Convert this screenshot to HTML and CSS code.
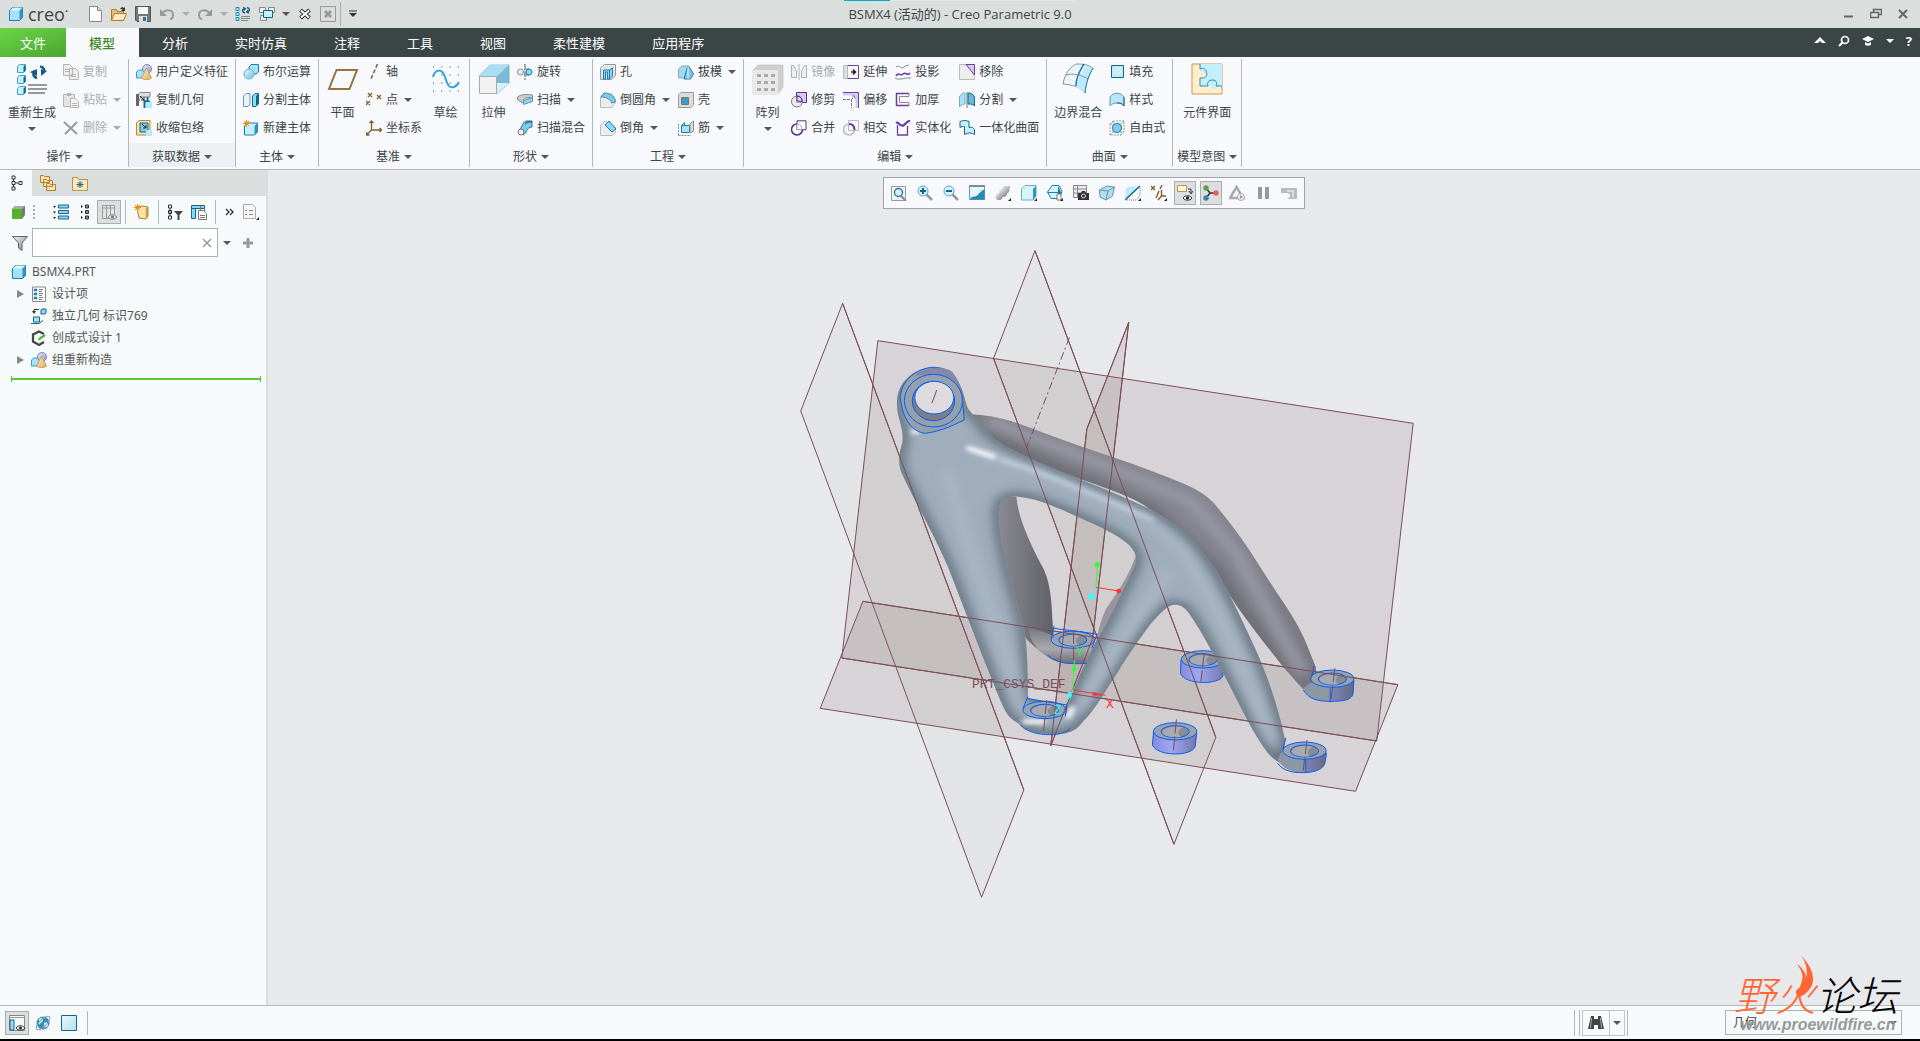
FILE: index.html
```html
<!DOCTYPE html>
<html lang="zh-CN">
<head>
  <meta charset="UTF-8" />
  <meta name="viewport" content="width=device-width, initial-scale=1.0" />
  <title>BSMX4 (活动的) - Creo Parametric 9.0</title>
  <link rel="stylesheet" href="styles.css">
</head>
<body>

<!-- iconos -->
<svg class="defs" width="0" height="0" aria-hidden="true">
  <defs>
    <linearGradient id="gb" x1="0" y1="0" x2="1" y2="1"><stop offset="0" stop-color="#dff5fd"/><stop offset="1" stop-color="#6fc4e6"/></linearGradient>
    <linearGradient id="gg" x1="0" y1="0" x2="1" y2="1"><stop offset="0" stop-color="#f8f8f8"/><stop offset="1" stop-color="#777"/></linearGradient>
    <linearGradient id="gy" x1="0" y1="0" x2="1" y2="1"><stop offset="0" stop-color="#fff1cf"/><stop offset="1" stop-color="#dcae5c"/></linearGradient>
    <linearGradient id="gv" x1="0" y1="0" x2="1" y2="1"><stop offset="0" stop-color="#eeeeff"/><stop offset="1" stop-color="#8d93d8"/></linearGradient>
  </defs>
  <symbol id="cube" viewBox="0 0 16 16"><path d="M1.500 4.500l3-3h10v10l-3 3h-10z" fill="#a5e3fa" stroke="#1b7fae"/><path d="M11.500 4.500l3-3v10l-3 3z" fill="#2e94c0"/><path d="M2 4.500l3-3h9l-3 3z" fill="#dcf6ff"/></symbol>
  <symbol id="new" viewBox="0 0 16 16"><path d="M2.500 .5h8l4 4v11h-12z" fill="#fcfcfc" stroke="#888"/><path d="M10.500 .5v4h4" fill="#ddd" stroke="#888"/></symbol>
  <symbol id="open" viewBox="0 0 16 16"><path d="M.5 14.500v-11h5l1 2h6v9z" fill="#e6c07a" stroke="#a87b2d"/><path d="M.5 14.500l3-7h12l-3 7z" fill="#ffe9bd" stroke="#a87b2d"/><path d="M9 3c1-2 3-2 4-1l1-1v4h-4l1.500-1.500c-1-1-2 0-2.500-.5z" fill="#333"/></symbol>
  <symbol id="save" viewBox="0 0 16 16"><path d="M.5.500h15v15H2l-1.500-1.500z" fill="#777" stroke="#555"/><path d="M3 1h10v7H3z" fill="#f7f7f7"/><path d="M4 10h8v6H4z" fill="#ddd"/><path d="M8 11h3v4H8z" fill="#27769c"/></symbol>
  <symbol id="undo" viewBox="0 0 16 16"><path d="M3 8c3-5 11-5 11 1 0 2-1 4-3 4" fill="none" stroke="#999" stroke-width="2"/><path d="M1 3v7h7z" fill="#999"/></symbol>
  <symbol id="redo" viewBox="0 0 16 16"><path d="M13 8c-3-5-11-5-11 1 0 2 1 4 3 4" fill="none" stroke="#999" stroke-width="2"/><path d="M15 3v7H8z" fill="#999"/></symbol>
  <symbol id="regen" viewBox="0 0 16 16"><path d="M1 1.500h3v3H1zM1 6.500h3v3H1zM1 11.500h3v3H1z" fill="#b9ecfc" stroke="#2088b5"/><path d="M6 10.500h9M6 12.500h9M6 14.500h7" stroke="#888"/><path d="M10 7C7 6 7 3.500 9 3M12 1.500c3 .5 3 3.500 1 4" fill="none" stroke="#155e82" stroke-width="1.500"/><path d="M8 .5l3.500 2-2.500 2.500zM14 8l-3.500-2L13 3.500z" fill="#155e82"/></symbol>
  <symbol id="regen32" viewBox="0 0 32 32">
    <path d="M1.500 3.500l2-2h6v6l-2 2h-6zM1.500 14.500l2-2h6v6l-2 2h-6zM1.500 25.500l2-2h6v6l-2 2h-6z" fill="#c3f0fd" stroke="#3fa3cb"/>
    <path d="M7.500 3.500l2-2v6l-2 2zM7.500 14.500l2-2v6l-2 2zM7.500 25.500l2-2v6l-2 2z" fill="#14658b"/>
    <path d="M12 22h19M12 26h19M12 30h17" stroke="#999" stroke-width="2"/>
    <path d="M21 15c-4-1-4.500-5-2-7M24 3.500c4 .5 5.500 4 3 7" fill="none" stroke="#155e82" stroke-width="2.500"/>
    <path d="M14 9l7-3v7zM31 8l-6 5 0-7z" fill="#155e82"/>
  </symbol>
  <symbol id="wins" viewBox="0 0 16 16"><path d="M.5 1.500h6v5h-6zM9.500 1.500h6v5h-6zM1.500 9.500h6v5h-6z" fill="#eee" stroke="#888"/><path d="M4.500 4.500h9v7h-9z" fill="#c8f0fc" stroke="#14658b"/></symbol>
  <symbol id="winx" viewBox="0 0 16 16"><path d="M3.500 4l9 8M12.500 4l-9 8" stroke="#333" stroke-width="4"/><path d="M4 4.500l8 7M12 4.500l-8 7" stroke="#fff" stroke-width="2"/></symbol>
  <symbol id="xbox" viewBox="0 0 16 16"><path d="M.5.500h15v15H.5z" fill="none" stroke="#999"/><path d="M5 5l6 6M11 5l-6 6" stroke="#999" stroke-width="3"/></symbol>
  <symbol id="more" viewBox="0 0 16 16"><path d="M4 5h8" stroke="#333"/><path d="M4 7h8l-4 4z" fill="#333"/></symbol>
  <symbol id="copy" viewBox="0 0 16 16"><path d="M.5.500h6l3 3v8h-9zM6.500 4.500h6l3 3v8h-9z" fill="#eee" stroke="#b5b5b5"/><path d="M2 5.500h4M2 7.500h4M8 10.500h5M8 12.500h5" stroke="#b5b5b5"/></symbol>
  <symbol id="paste" viewBox="0 0 16 16"><path d="M.5 2.500h11v12H.5z" fill="#e4e4e4" stroke="#b5b5b5"/><path d="M4 1h4v3H4z" fill="#b5b5b5"/><path d="M7.500 6.500h5l3 3v6h-8z" fill="#f3f3f3" stroke="#b5b5b5"/><path d="M9 11.500h5M9 13.500h5" stroke="#b5b5b5"/></symbol>
  <symbol id="del" viewBox="0 0 16 16"><path d="M1 2l13 12M14 2L2 14" stroke="#999" stroke-width="2"/></symbol>
  <symbol id="udf" viewBox="0 0 16 16"><path d="M.5 8l2-2h6v6l-2 2h-6z" fill="#a5e3fa" stroke="#3b9bc4"/><circle cx="11" cy="5" r="4.500" fill="url(#gv)" stroke="#8084b5"/><path d="M10.500 4l5 10c-2 2-8 2-10 0z" fill="url(#gy)" stroke="#b58a3a" stroke-width=".7"/></symbol>
  <symbol id="cgeo" viewBox="0 0 16 16"><path d="M1.500 12V3L4 .5h10V5H5z" fill="#ddd" stroke="#888"/><path d="M0 2h3v12H0z" fill="#666"/><path d="M8.500 8v8M8 9.500h6M11.500 5v4" stroke="#196d94" stroke-width="2"/><path d="M10 10h6v6h-6z" fill="#aceeff"/><path d="M4 4l4 4m0-3v3H5" stroke="#222" fill="none"/></symbol>
  <symbol id="shrink" viewBox="0 0 16 16"><path d="M.5 3L3 .5h11V11l-3 4H.5z" fill="#ffe2a5" stroke="#b58a3a"/><path d="M4 3h8v9H4z" fill="#7dcdec" stroke="#14658b"/><path d="M10 10h6v6h-6z" fill="#aceeff"/><path d="M6 4l4 4m0-3v3H7" stroke="#222" fill="none"/></symbol>
  <symbol id="bool" viewBox="0 0 16 16"><path d="M6 3l2-2.500h7.500V8L13 10H6z" fill="#a5e3fa" stroke="#1b7fae"/><circle cx="6" cy="10" r="5" fill="url(#gb)" stroke="#79a9bd"/></symbol>
  <symbol id="splitb" viewBox="0 0 16 16"><path d="M.5 4L3 1.500h4V12l-2 2.500H.5z" fill="#e6f3f8" stroke="#6f99ab"/><path d="M9.500 4L12 1.500h3.500V12L13 14.500H9.500z" fill="#8fdbf6" stroke="#14658b"/><path d="M13 4v10l2-2V2z" fill="#14658b"/></symbol>
  <symbol id="newb" viewBox="0 0 16 16"><path d="M1.500 6l3-3h10v9l-3 3h-10z" fill="#c4effc" stroke="#1b7fae"/><path d="M11.500 6l3-3v9l-3 3z" fill="#2e94c0"/><path d="M3.500 0v7M0 3.500h7M1 1l5 5M6 1L1 6" stroke="#f08a00"/></symbol>
  <symbol id="plane" viewBox="0 0 32 32"><path d="M9.500 7H30L22.500 26H2z" fill="none" stroke="#957441" stroke-width="2"/></symbol>
  <symbol id="axis" viewBox="0 0 16 16"><path d="M11.500 0L4.500 16" stroke="#80602a" stroke-width="1.500" stroke-dasharray="4 2"/></symbol>
  <symbol id="pts" viewBox="0 0 16 16"><path d="M2 1l4 4M6 1L2 5M11 3l4 4M15 3l-4 4M0 9l4 4M4 9l-4 4" stroke="#80602a" stroke-width="1.300"/></symbol>
  <symbol id="csys" viewBox="0 0 16 16"><path d="M5.500 1v9h10M5.500 10L.5 15M3.500 3l2-2 2 2M13.500 8l2 2-2 2M.5 12v3h3" fill="none" stroke="#80602a" stroke-width="1.300"/></symbol>
  <symbol id="sketch" viewBox="0 0 32 32"><path d="M3 4h26M3 12h26M3 20h26M3 28h26" stroke="#444" stroke-dasharray="1 7.300"/><path d="M3 14c2-8 9-9 12 0 3 10 5 11 9 10 3-1 4-3 5-5" fill="none" stroke="#2fa3db" stroke-width="2"/></symbol>
  <symbol id="extr" viewBox="0 0 32 32"><path d="M1 13L12 2h19v18L19 31z" fill="#7cbbd4" stroke="#4d9abb" stroke-width=".6"/><path d="M1 13L12 2h19L19 13z" fill="#a9dff3"/><path d="M19 31l12-11H19z" fill="#d5f2fc"/><path d="M1.500 13.500h17v17h-17z" fill="#f1f1f1" stroke="#aaa"/></symbol>
  <symbol id="rev" viewBox="0 0 16 16"><path d="M8 0v16" stroke="#555" stroke-dasharray="4 1 1 1"/><circle cx="3.500" cy="8" r="3" fill="#eee" stroke="#888"/><circle cx="12" cy="8" r="3" fill="#8bd7f4" stroke="#1b7fae"/><path d="M7 5h5M7 11h5" stroke="#1b7fae"/></symbol>
  <symbol id="sweep" viewBox="0 0 16 16"><path d="M.5 5c4-3 10-3 15-2v3c-5-1-9 0-9 2v3L.5 8z" fill="#ccc" stroke="#888"/><path d="M6.500 8.500l9-3v4l-9 3z" fill="#8bd7f4" stroke="#5e98b0"/></symbol>
  <symbol id="blend" viewBox="0 0 16 16"><path d="M1 11C5 9 5 2 9 1h6v6c-6 0-5 7-9 8z" fill="#7fc7e6" stroke="#1b7fae"/><path d="M8 4c3-3 5-2 7-2" stroke="#333" fill="none"/><circle cx="4" cy="12" r="3" fill="#eee" stroke="#777"/></symbol>
  <symbol id="hole" viewBox="0 0 16 16"><path d="M.5 4l4-3.500h11v11l-4 4H.5z" fill="#e6e6e6" stroke="#999"/><path d="M3.500 15V6h6v9h-2V8h-2v7zM9.500 6l3-2v8l-3 3z" fill="#8bd7f4" stroke="#1b7fae"/></symbol>
  <symbol id="round" viewBox="0 0 16 16"><path d="M.5 5L4 1l8 1 4 7-4 6.500H.5z" fill="#ececec" stroke="#bbb"/><path d="M4 1c7 0 11 4 11.500 9l-4 1C11 8 7 5 1 5z" fill="#7fc7e6" stroke="#1b7fae" stroke-width=".7"/></symbol>
  <symbol id="chamf" viewBox="0 0 16 16"><path d="M.5 5L5 1l11 7v4l-4 3.500H.5z" fill="#ececec" stroke="#bbb"/><path d="M5 5l4-4 7 8-4 3z" fill="#8bd7f4" stroke="#1b7fae"/></symbol>
  <symbol id="draft" viewBox="0 0 16 16"><path d="M.5 5L4 2h6v12H.5z" fill="#a5d8ec" stroke="#8ab"/><path d="M10 1l5.500 9-3 5H6z" fill="#7fc7e6" stroke="#1b7fae"/><path d="M10 1v14" stroke="#eee"/></symbol>
  <symbol id="shell" viewBox="0 0 16 16"><path d="M.5 3L3 .5h12.500v12L13 15.500H.5z" fill="#ddd" stroke="#999"/><path d="M3.500 5.500h7v7h-7z" fill="#3d9cc4" stroke="#777"/></symbol>
  <symbol id="rib" viewBox="0 0 16 16"><path d="M.5 15V4M.5 15.500H13" stroke="#888" stroke-dasharray="2 1"/><path d="M3.500 5.500h8v7h-8z" fill="#a5e3fa" stroke="#1b7fae"/><path d="M3.500 5.500l3-3v3" fill="none" stroke="#1b7fae"/><path d="M12 13V4l3.500-3v10z" fill="#ddd" stroke="#888"/></symbol>
  <symbol id="patt" viewBox="0 0 32 32"><path d="M1 7l5-5h25v22l-5 7H1z" fill="#cfcfcf" stroke="#bbb" stroke-width=".6"/><path d="M1 7h25v24H1z" fill="#e8e8e8"/><path d="M5 11h4v3H5zM12 11h4v3h-4zM19 11h4v3h-4zM5 18h4v3H5zM12 18h4v3h-4zM19 18h4v3h-4zM5 25h4v3H5zM12 25h4v3h-4zM19 25h4v3h-4z" fill="#aaa"/></symbol>
  <symbol id="mirror" viewBox="0 0 16 16"><path d="M8 0v16M.5 1.500v12h5V7l-3-5.500zM15.500 1.500v12h-5V7l3-5.500z" fill="#eee" stroke="#b0b0b0"/></symbol>
  <symbol id="trim" viewBox="0 0 16 16"><path d="M5.500.500h10v10h-10z" fill="#d9c8f5" stroke="#55308a"/><circle cx="6" cy="9.500" r="5.500" fill="#e8e8e8" fill-opacity=".6" stroke="#777"/><path d="M6 9V4c3 0 5 2 5 5.500z" fill="none" stroke="#55308a"/></symbol>
  <symbol id="merge" viewBox="0 0 16 16"><circle cx="6" cy="9.500" r="5.500" fill="none" stroke="#55308a" stroke-width="1.500"/><path d="M6 9.500V.800h9v9z" fill="#fff" stroke="#55308a"/><path d="M6 4c3 0 5 2 5 5.500H6z" fill="#fff" stroke="#aaa"/></symbol>
  <symbol id="ext" viewBox="0 0 16 16"><path d="M.5 1.500h4v13h-4z" fill="#ddd" stroke="#bbb"/><path d="M4.500 1.500h11v13h-11" fill="none" stroke="#6c3d9c"/><path d="M8 8h4m-2-2.500L12.500 8 10 10.500" fill="none" stroke="#222" stroke-width="1.500"/></symbol>
  <symbol id="offs" viewBox="0 0 16 16"><path d="M0 2h14v14" fill="none" stroke="#d9c8f5" stroke-width="3"/><path d="M0 .5h15.500V16" fill="none" stroke="#6c3d9c"/><path d="M0 7.500h8.500V16M8 8l4-4M9 4h3v3" fill="none" stroke="#777" stroke-dasharray="3 1"/></symbol>
  <symbol id="inter" viewBox="0 0 16 16"><circle cx="6" cy="9.500" r="5.500" fill="none" stroke="#bbb" stroke-width="1.500"/><path d="M5.500.500h10v10h-10z" fill="none" stroke="#bbb"/><path d="M6 4c3 0 5.500 2 5.500 6" fill="none" stroke="#6c3d9c" stroke-width="2"/></symbol>
  <symbol id="proj" viewBox="0 0 16 16"><path d="M1 3c4-3 4 3 8 0s3-1 5-2M0 14c5 3 10-1 16 0" fill="none" stroke="#888"/><path d="M1 12c3-5 4 1 7-2s4 3 7-1" fill="none" stroke="#6c3d9c" stroke-width="1.600"/></symbol>
  <symbol id="thick" viewBox="0 0 16 16"><path d="M14 1.500H1.500v12H14" fill="none" stroke="#6c3d9c" stroke-width="1.500"/><path d="M14 4.500H4.500v6H14M14 1v3m0 7v3" fill="none" stroke="#888"/></symbol>
  <symbol id="solid" viewBox="0 0 16 16"><path d="M2.500 5v10h10V6" fill="#fafafa" stroke="#6c3d9c" stroke-width="1.300"/><path d="M1 3c3-2 4 5 8 2s3-4 6-4" fill="none" stroke="#6c3d9c" stroke-width="2.200"/></symbol>
  <symbol id="remove" viewBox="0 0 16 16"><path d="M.5.500h15v15H.5z" fill="#eee" stroke="#bbb"/><path d="M7 .5h8.500V11z" fill="#d9c8f5" stroke="#6c3d9c"/></symbol>
  <symbol id="split" viewBox="0 0 16 16"><path d="M.5 5C2 2 4 1 6 1v11c-2 0-4 1-5.500 3z" fill="#a5e3fa" stroke="#79a9bd"/><path d="M9 1c3 0 5 1 6.500 4v9C14 12 12 12 9 12z" fill="#68b9da" stroke="#14658b"/><path d="M8 0v16" stroke="#777"/></symbol>
  <symbol id="uni" viewBox="0 0 16 16"><path d="M1 1.500c4-1.500 6-1 9 0v6c3-1 4 0 5.500 2v5c-3-2-6-2-10 0v-8c-2 0-3 0-4.500 1z" fill="#c9effa" stroke="#14658b"/></symbol>
  <symbol id="bblend" viewBox="0 0 32 32"><path d="M1 21C3 9 9 4 14 1c8 0 13 1 17 4-4 7-7 14-8 25-6-7-13-8-22-9z" fill="#edf7fb" stroke="#8b9499"/><path d="M18 12l6-9 7 2c-4 7-7 14-8 25l-9-6z" fill="#bdeafa"/><path d="M14 23c0-8 4-16 8-22" fill="none" stroke="#1b7fae" stroke-width="1.500"/><path d="M4 12c8-2 15 0 22 4" fill="none" stroke="#8b9499"/><path d="M31 5c-4 7-7 14-8 25" fill="none" stroke="#1b7fae"/></symbol>
  <symbol id="fill" viewBox="0 0 16 16"><path d="M2.500 1.500h12v12h-12z" fill="#bfe9f9" stroke="#14658b"/><path d="M4 11l8-8M7 12l6-6M4 7l4-4" stroke="#fff"/></symbol>
  <symbol id="style" viewBox="0 0 16 16"><path d="M1 5c3-5 11-5 14 0v9c-3-4-11-4-14 0z" fill="#b9e6f7" stroke="#6f99ab"/><path d="M15 5v9c-2-3-4-3-7-3" fill="none" stroke="#14658b"/></symbol>
  <symbol id="free" viewBox="0 0 16 16"><path d="M1 4h11v11H1zM4 1h11v11H4zM1 4l3-3M12 4l3-3M12 15l3-3M1 15l3-3" fill="none" stroke="#999" stroke-dasharray="2 1"/><circle cx="8" cy="8" r="4.500" fill="#7fcbe8" stroke="#1b7fae"/></symbol>
  <symbol id="iface" viewBox="0 0 32 32"><path d="M1 1h30v30H1z" fill="#ffedcb" stroke="#c79a4e"/><path d="M9 1h22v22h-5c3 4-8 4-5 0H9v-7c7 3 7-9 0-7z" fill="#c6effd"/><path d="M9 1v5c7-4 10 10 2 9H9v8h8c-3-8 12-8 8 0h6" fill="none" stroke="#2b8cb5"/></symbol>
  <symbol id="tree" viewBox="0 0 16 16"><path d="M3 1h3v3H3zM3 6.500h3v3H3zM3 12h3v3H3zM10 6.500h3v3h-3z" fill="#fff" stroke="#333"/><path d="M4.500 4v2M4.500 10v2M6 8h4" stroke="#333"/></symbol>
  <symbol id="folders" viewBox="0 0 16 16"><path d="M.5.500h3l1 1h5v6h-9zM3.500 4.500h3l1 1h5v6h-9zM6.500 8.500h3l1 1h5v6h-9z" fill="#ffe2a5" stroke="#a8803c"/></symbol>
  <symbol id="fav" viewBox="0 0 16 16"><path d="M.5 2.500h5l1 2h9v11H.5z" fill="#ffe9bd" stroke="#b8934f"/><path d="M8 6v7M4.500 9.500h7M5.500 7l5 5M10.500 7l-5 5" stroke="#14658b"/></symbol>
  <symbol id="gcube" viewBox="0 0 16 16"><path d="M1 5l3-3h10v9l-3 4H1z" fill="#777"/><path d="M1 5l3-3h10l-3 3z" fill="#aaa"/><path d="M1 5h10v10H1z" fill="#53b12e"/></symbol>
  <symbol id="dots" viewBox="0 0 10 16"><path d="M5 1v15" stroke="#aaa" stroke-width="2" stroke-dasharray="2 2"/></symbol>
  <symbol id="list" viewBox="0 0 16 16"><path d="M5.500 1h10v3h-10zM5.500 6.500h10v3h-10zM5.500 12h10v3h-10z" fill="#8bd7f4" stroke="#14658b"/><path d="M0 2h3L1.500 4zM0 7.500h3l-1.500 2zM0 13h3l-1.500 2z" fill="#222"/></symbol>
  <symbol id="list2" viewBox="0 0 16 16"><path d="M8.500 1h3v3h-3zM8.500 6.500h3v3h-3zM8.500 12h3v3h-3z" fill="#888" stroke="#333"/><path d="M4 1v3l2-1.500zM4 6.500v3L6 8zM4 12v3l2-1.500z" fill="#222"/></symbol>
  <symbol id="cols" viewBox="0 0 16 16"><path d="M1.500 1.500h12v13h-12zM1 4h13M5.500 1v13M9.500 1v13" fill="#e4e4e4" stroke="#999"/><path d="M7 13c2-3 6-3 9 0-3 3-7 3-9 0z" fill="#ddd" stroke="#888"/><circle cx="11.500" cy="13" r="1.500" fill="#777"/></symbol>
  <symbol id="newf" viewBox="0 0 16 16"><path d="M3 4l5-2 6 1v9l-2 3-7-1z" fill="#ffe2a5" stroke="#a8803c"/><path d="M11.500 5l2.500-2v9l-2 3z" fill="#c99b4c"/><path d="M3.500 0v7M0 3.500h7M1 1l5 5M6 1L1 6" stroke="#f08a00"/></symbol>
  <symbol id="tfilt" viewBox="0 0 16 16"><path d="M1.500 1h3v3h-3zM1.500 12h3v3h-3z" fill="#fff" stroke="#333"/><path d="M1.500 6.500h3v3h-3z" fill="#4bb4de" stroke="#333"/><path d="M3 4v2M3 10v2" stroke="#333"/><path d="M7 7h9l-3.500 4v5h-2v-5z" fill="#444"/></symbol>
  <symbol id="tcols" viewBox="0 0 16 16"><path d="M.5 1.500h13v3H.5z" fill="#8bd7f4" stroke="#14658b"/><path d="M.5 4.500h4v10h-4z" fill="#8bd7f4" stroke="#14658b"/><path d="M9.500 1.500v5M13.500 4v3" stroke="#777"/><path d="M7.500 6.500h5l3 3v6h-8z" fill="#fff" stroke="#777"/><path d="M9 11.500h5M9 13.500h5" stroke="#777"/></symbol>
  <symbol id="chev" viewBox="0 0 16 16"><path d="M4 5l3 3-3 3M8 5l3 3-3 3" fill="none" stroke="#333" stroke-width="1.400"/></symbol>
  <symbol id="doc" viewBox="0 0 16 16"><path d="M.5.500h9l3 3v11H.5z" fill="#f6f6f6" stroke="#aaa"/><path d="M2 6.500h2M2 10.500h2M6 6.500h4M6 10.500h4" stroke="#888"/><path d="M16 13v3h-3z" fill="#222"/></symbol>
  <symbol id="funnel" viewBox="0 0 16 16"><path d="M.5 1.500h15L10 8v7.500L6.500 13V8z" fill="url(#gg)" stroke="#666"/></symbol>
  <symbol id="ditem" viewBox="0 0 16 16"><path d="M1.500 1h13v14.500h-13z" fill="#fff" stroke="#888"/><path d="M3 3h3v2H3zM3 7h3v2H3zM3 11h3v2H3z" fill="#2e94c0" stroke="#14658b" stroke-width=".5"/><path d="M8 3.500h4M8 5.500h3M8 7.500h4M8 9.500h3M8 11.500h4M8 13.500h3" stroke="#777"/></symbol>
  <symbol id="igeo" viewBox="0 0 16 16"><path d="M2.500 9h6v5h-6z" fill="#a5e3fa" stroke="#14658b"/><path d="M0 15.500h8l4-3" fill="none" stroke="#14658b"/><path d="M10 2l1-1h4v4l-1 1h-4z" fill="#8bd7f4" stroke="#14658b"/><path d="M8 1.500H3V4" fill="none" stroke="#333"/><path d="M1 3h4L3 6z" fill="#333"/></symbol>
  <symbol id="gen" viewBox="0 0 16 16"><path d="M13 4L8 1.500 2 4.500v7L8 15l5-3" fill="none" stroke="#444" stroke-width="2.200"/><path d="M8 10c1-3 3-2 6-5" fill="none" stroke="#53b12e" stroke-width="2.200"/></symbol>
  <symbol id="zfit" viewBox="0 0 16 16"><path d="M.5 1.500h14v14H.5z" fill="#f4f4f4" stroke="#999"/><path d="M10 11l5 5" stroke="#888" stroke-width="2"/><circle cx="7.500" cy="7.500" r="4" fill="#d8f2fc" stroke="#2b7a9e" stroke-width="1.400"/></symbol>
  <symbol id="zin" viewBox="0 0 16 16"><path d="M9 9l6 6" stroke="#999" stroke-width="2.500"/><circle cx="6" cy="6" r="5" fill="#d8f2fc" stroke="#5aa4c4"/><path d="M6 3v6M3 6h6" stroke="#14658b" stroke-width="2"/></symbol>
  <symbol id="zout" viewBox="0 0 16 16"><path d="M9 9l6 6" stroke="#999" stroke-width="2.500"/><circle cx="6" cy="6" r="5" fill="#d8f2fc" stroke="#5aa4c4"/><path d="M3 6h6" stroke="#14658b" stroke-width="2"/></symbol>
  <symbol id="repaint" viewBox="0 0 16 16"><path d="M.5 1.500h15v13H.5z" fill="#e2f6fd" stroke="#6f99ab"/><path d="M1 14.500c1-3 3-3 5-3 4-1 5-6 9.500-7v10z" fill="#2b87b3"/><path d="M0 1h16" stroke="#888" stroke-width="2"/></symbol>
  <symbol id="shade" viewBox="0 0 16 16"><path d="M9 1l6 0-1 6-4 3-3-2-1-3z" fill="url(#gg)"/><circle cx="8" cy="8" r="4" fill="url(#gg)"/><circle cx="4" cy="11.500" r="3.500" fill="url(#gg)"/><path d="M16 13v3h-3z" fill="#222"/></symbol>
  <symbol id="vcube" viewBox="0 0 16 16"><path d="M.5 4L4 .5h11V11l-3 4H.5z" fill="#d5f4fe" stroke="#6fa9c0"/><path d="M12 4l3-3v10l-3 4z" fill="#2e94c0"/><path d="M16 13v3h-3z" fill="#222"/></symbol>
  <symbol id="named" viewBox="0 0 16 16"><path d="M.5 7L5 .500h7l3 6-4 7H4z" fill="#d5f4fe" stroke="#1b7fae"/><path d="M11 1v8h4z" fill="#1b7fae"/><path d="M.5 7.500H11" stroke="#1b7fae"/><path d="M10 9h4v6h-4z" fill="#fff" stroke="#777"/><path d="M16 13v3h-3z" fill="#222"/></symbol>
  <symbol id="cam" viewBox="0 0 16 16"><path d="M.5.500h13v12H.5zM0 4h14M0 8h14M4.500 0v12" fill="#eee" stroke="#888"/><path d="M5 8h3l1-2h3l1 2h3v7H5z" fill="#333"/><circle cx="10.500" cy="11" r="2" fill="#333" stroke="#ddd"/></symbol>
  <symbol id="persp" viewBox="0 0 16 16"><path d="M.5 5L8 1l7.500 1-2 9L7 15l-6-3z" fill="#b7dcea" stroke="#5e98b0"/><path d="M.5 5L9 6l6.500-4M9 6l-2 9" fill="none" stroke="#5e98b0"/></symbol>
  <symbol id="sect" viewBox="0 0 16 16"><path d="M.5 14V4L4 1.500h10z" fill="#bfe9f9"/><path d="M0 15L15 1" stroke="#14658b" stroke-width="1.500"/><path d="M2 15h9l4-4V3" fill="none" stroke="#777" stroke-dasharray="1 1"/><path d="M16 13v3h-3z" fill="#222"/></symbol>
  <symbol id="datum" viewBox="0 0 16 16"><path d="M0 1l4 4M4 1L0 5M11 0L9 4M8 6l-3 7M10.500 5v6H15M10.500 11L7 15" fill="none" stroke="#80602a" stroke-width="1.400" /><path d="M16 13v3h-3z" fill="#222"/></symbol>
  <symbol id="annot" viewBox="0 0 16 16"><path d="M.5.500h9v6h-9z" fill="#fff5cf" stroke="#b0985c"/><path d="M11 4h3v4M12 6l2 3 2-3" fill="none" stroke="#333"/><path d="M6 13c2-3 7-3 9 0-2 3-7 3-9 0z" fill="#fff" stroke="#333"/><circle cx="10.500" cy="13" r="1.700" fill="#222"/></symbol>
  <symbol id="spin" viewBox="0 0 16 16"><path d="M3 3l4 5h6M7 8l-4 5" fill="none" stroke="#333" stroke-width="1.500"/><circle cx="3" cy="3" r="2.700" fill="#5b9d4c"/><circle cx="13" cy="8" r="2.700" fill="#e4605a"/><circle cx="3" cy="13" r="2.700" fill="#3a83b5"/></symbol>
  <symbol id="simu" viewBox="0 0 16 16"><path d="M7.500 2L14 13H1z" fill="none" stroke="#aaa" stroke-width="2.500"/><circle cx="12" cy="12" r="3.500" fill="#eee" stroke="#aaa"/><path d="M11 10l3 2-3 2z" fill="#999"/></symbol>
  <symbol id="pause" viewBox="0 0 16 16"><path d="M3 2h4v12H3zM10 2h4v12h-4z" fill="#999"/></symbol>
  <symbol id="res" viewBox="0 0 16 16"><path d="M0 3h16v11H6c4-2 4-5 0-6H0z" fill="#bbb"/><path d="M6 6h6v6" fill="none" stroke="#ddd" stroke-width="2"/></symbol>
  <symbol id="pane" viewBox="0 0 16 16"><path d="M.5.500h15v15H.5z" fill="#f6f6f6" stroke="#888"/><path d="M0 2.500h16" stroke="#999"/><path d="M1 5h4v10H1z" fill="#9adcf5" stroke="#14658b"/><path d="M7 13c2-3 6-3 9 0-2 3-7 3-9 0z" fill="#fff" stroke="#333"/><circle cx="11.500" cy="13" r="1.500" fill="#222"/></symbol>
  <symbol id="globe" viewBox="0 0 16 16"><circle cx="8" cy="8" r="6.500" fill="#2f8fc0"/><path d="M4 4c2-2 4-1 4 1s-3 3-4 5zM9 8c3-2 4 0 4 2s-3 3-4 2z" fill="#d9f2fb"/><ellipse cx="8" cy="8" rx="9" ry="3.500" transform="rotate(-45 8 8)" fill="none" stroke="#999"/></symbol>
  <symbol id="blank" viewBox="0 0 16 16"><path d="M.5.500h15v15H.5z" fill="url(#gb)" fill-opacity=".5" stroke="#14658b"/></symbol>
  <symbol id="binoc" viewBox="0 0 16 16"><path d="M3 1h3v3h4V1h3l3 13h-6v-4H6v4H0z" fill="#444"/><path d="M3 3h1L3 13H2zM12 3h1l1 10h-1z" fill="#aaa"/></symbol>
</svg>

<header class="titlebar">
  <div class="quick">
    <svg class="i"><use href="#cube"/></svg>
    <span class="brand">creo<sup>•</sup></span>
    <button title="新建"><svg class="i"><use href="#new"/></svg></button>
    <button title="打开"><svg class="i"><use href="#open"/></svg></button>
    <button title="保存"><svg class="i"><use href="#save"/></svg></button>
    <button title="撤销"><svg class="i"><use href="#undo"/></svg></button>
    <button class="drop off" title="撤销列表"><i class="arr"></i></button>
    <button title="重做"><svg class="i"><use href="#redo"/></svg></button>
    <button class="drop off" title="重做列表"><i class="arr"></i></button>
    <button title="重新生成"><svg class="i"><use href="#regen"/></svg></button>
    <button title="窗口"><svg class="i"><use href="#wins"/></svg></button>
    <button class="drop" title="窗口列表"><i class="arr"></i></button>
    <button title="关闭窗口"><svg class="i"><use href="#winx"/></svg></button>
    <button class="last" title="拭除"><svg class="i"><use href="#xbox"/></svg></button>
    <button title="自定义"><svg class="i"><use href="#more"/></svg></button>
  </div>
  <h1>BSMX4 (活动的) - Creo Parametric 9.0</h1>
  <div class="win">
    <button title="最小化"><svg viewBox="0 0 12 12"><path d="M1 8.500h9" stroke="#666" stroke-width="2"/></svg></button>
    <button title="还原"><svg viewBox="0 0 12 12"><path d="M3.500 4.500v-3h8v5h-3M.500 4.500h8v5h-8z" fill="none" stroke="#666" stroke-width="1.500"/></svg></button>
    <button title="关闭"><svg viewBox="0 0 12 12"><path d="M2 2l8 8M10 2l-8 8" stroke="#666" stroke-width="2"/></svg></button>
  </div>
</header>

<nav class="tabs">
  <button class="file">文件</button>
  <button class="on">模型</button>
  <button>分析</button>
  <button>实时仿真</button>
  <button>注释</button>
  <button>工具</button>
  <button>视图</button>
  <button>柔性建模</button>
  <button>应用程序</button>
  <div class="tools">
    <button title="最小化功能区"><svg viewBox="0 0 12 12"><path d="M0 8l6-6 6 6H8L6 6 4 8z" fill="#fff"/></svg></button>
    <button title="搜索"><svg viewBox="0 0 12 12"><circle cx="7" cy="5" r="3.500" fill="none" stroke="#fff" stroke-width="1.700"/><path d="M5 7l-4 4" stroke="#fff" stroke-width="2"/></svg></button>
    <button title="学习"><svg viewBox="0 0 12 12"><path d="M0 4l6-3 6 3-6 3zM3 7l3 1.500L9 7v3c-2 1-4 1-6 0z" fill="#fff"/></svg></button>
    <button title="更多"><i class="arr"></i></button>
    <button title="帮助"><b>?</b></button>
  </div>
</nav>

<section class="ribbon">
  <div class="group">
    <div class="body">
      <button class="big"><svg><use href="#regen32"/></svg>重新生成<i class="arr"></i></button>
      <div class="col off">
        <button><svg class="i"><use href="#copy"/></svg>复制</button>
        <button><svg class="i"><use href="#paste"/></svg>粘贴<i class="arr"></i></button>
        <button><svg class="i"><use href="#del"/></svg>删除<i class="arr"></i></button>
      </div>
    </div>
    <button class="name">操作<i class="arr"></i></button>
  </div>
  <div class="group hot">
    <div class="body">
      <div class="col">
        <button><svg class="i"><use href="#udf"/></svg>用户定义特征</button>
        <button><svg class="i"><use href="#cgeo"/></svg>复制几何</button>
        <button><svg class="i"><use href="#shrink"/></svg>收缩包络</button>
      </div>
    </div>
    <button class="name">获取数据<i class="arr"></i></button>
  </div>
  <div class="group">
    <div class="body">
      <div class="col">
        <button><svg class="i"><use href="#bool"/></svg>布尔运算</button>
        <button><svg class="i"><use href="#splitb"/></svg>分割主体</button>
        <button><svg class="i"><use href="#newb"/></svg>新建主体</button>
      </div>
    </div>
    <button class="name">主体<i class="arr"></i></button>
  </div>
  <div class="group">
    <div class="body">
      <button class="big"><svg><use href="#plane"/></svg>平面</button>
      <div class="col">
        <button><svg class="i"><use href="#axis"/></svg>轴</button>
        <button><svg class="i"><use href="#pts"/></svg>点<i class="arr"></i></button>
        <button><svg class="i"><use href="#csys"/></svg>坐标系</button>
      </div>
      <button class="big"><svg><use href="#sketch"/></svg>草绘</button>
    </div>
    <button class="name">基准<i class="arr"></i></button>
  </div>
  <div class="group">
    <div class="body">
      <button class="big"><svg><use href="#extr"/></svg>拉伸</button>
      <div class="col">
        <button><svg class="i"><use href="#rev"/></svg>旋转</button>
        <button><svg class="i"><use href="#sweep"/></svg>扫描<i class="arr"></i></button>
        <button><svg class="i"><use href="#blend"/></svg>扫描混合</button>
      </div>
    </div>
    <button class="name">形状<i class="arr"></i></button>
  </div>
  <div class="group">
    <div class="body">
      <div class="col">
        <button><svg class="i"><use href="#hole"/></svg>孔</button>
        <button><svg class="i"><use href="#round"/></svg>倒圆角<i class="arr"></i></button>
        <button><svg class="i"><use href="#chamf"/></svg>倒角<i class="arr"></i></button>
      </div>
      <div class="col">
        <button><svg class="i"><use href="#draft"/></svg>拔模<i class="arr"></i></button>
        <button><svg class="i"><use href="#shell"/></svg>壳</button>
        <button><svg class="i"><use href="#rib"/></svg>筋<i class="arr"></i></button>
      </div>
    </div>
    <button class="name">工程<i class="arr"></i></button>
  </div>
  <div class="group">
    <div class="body">
      <button class="big"><svg><use href="#patt"/></svg>阵列<i class="arr"></i></button>
      <div class="col">
        <button class="off"><svg class="i"><use href="#mirror"/></svg>镜像</button>
        <button><svg class="i"><use href="#trim"/></svg>修剪</button>
        <button><svg class="i"><use href="#merge"/></svg>合并</button>
      </div>
      <div class="col">
        <button><svg class="i"><use href="#ext"/></svg>延伸</button>
        <button><svg class="i"><use href="#offs"/></svg>偏移</button>
        <button><svg class="i"><use href="#inter"/></svg>相交</button>
      </div>
      <div class="col">
        <button><svg class="i"><use href="#proj"/></svg>投影</button>
        <button><svg class="i"><use href="#thick"/></svg>加厚</button>
        <button><svg class="i"><use href="#solid"/></svg>实体化</button>
      </div>
      <div class="col">
        <button><svg class="i"><use href="#remove"/></svg>移除</button>
        <button><svg class="i"><use href="#split"/></svg>分割<i class="arr"></i></button>
        <button><svg class="i"><use href="#uni"/></svg>一体化曲面</button>
      </div>
    </div>
    <button class="name">编辑<i class="arr"></i></button>
  </div>
  <div class="group">
    <div class="body">
      <button class="big"><svg><use href="#bblend"/></svg>边界混合</button>
      <div class="col">
        <button><svg class="i"><use href="#fill"/></svg>填充</button>
        <button><svg class="i"><use href="#style"/></svg>样式</button>
        <button><svg class="i"><use href="#free"/></svg>自由式</button>
      </div>
    </div>
    <button class="name">曲面<i class="arr"></i></button>
  </div>
  <div class="group">
    <div class="body">
      <button class="big"><svg><use href="#iface"/></svg>元件界面</button>
    </div>
    <button class="name">模型意图<i class="arr"></i></button>
  </div>
</section>

<main>
  <aside>
    <div class="sidetabs">
      <button class="on" title="模型树"><svg class="i"><use href="#tree"/></svg></button>
      <button title="文件夹浏览器"><svg class="i"><use href="#folders"/></svg></button>
      <button title="收藏夹"><svg class="i"><use href="#fav"/></svg></button>
    </div>
    <div class="treebar">
      <button title="主体"><svg class="i"><use href="#gcube"/></svg></button>
      <svg class="grip"><use href="#dots"/></svg>
      <button title="展开"><svg class="i"><use href="#list"/></svg></button>
      <button title="折叠"><svg class="i"><use href="#list2"/></svg></button>
      <button class="pressed" title="列"><svg class="i"><use href="#cols"/></svg></button>
      <span class="sep"></span>
      <button title="新建"><svg class="i"><use href="#newf"/></svg></button>
      <span class="sep"></span>
      <button title="树过滤器"><svg class="i"><use href="#tfilt"/></svg></button>
      <button title="树列"><svg class="i"><use href="#tcols"/></svg></button>
      <span class="sep"></span>
      <button class="narrow" title="更多"><svg class="i"><use href="#chev"/></svg></button>
      <button title="设置"><svg class="i"><use href="#doc"/></svg></button>
    </div>
    <div class="filter">
      <svg class="i"><use href="#funnel"/></svg>
      <div class="box">
        <input type="text" aria-label="过滤">
        <button title="清除"><svg viewBox="0 0 10 10"><path d="M1 1l8 8M9 1L1 9" stroke="#999" stroke-width="1.500"/></svg></button>
      </div>
      <button title="选项"><i class="arr"></i></button>
      <button title="添加"><svg viewBox="0 0 10 10"><path d="M5 0v10M0 5h10" stroke="#999" stroke-width="3"/></svg></button>
    </div>
    <ul class="tree">
      <li class="root"><svg class="i"><use href="#cube"/></svg>BSMX4.PRT</li>
      <li class="fold"><svg class="i"><use href="#ditem"/></svg>设计项</li>
      <li><svg class="i"><use href="#igeo"/></svg>独立几何 标识769</li>
      <li><svg class="i"><use href="#gen"/></svg>创成式设计 1</li>
      <li class="fold"><svg class="i"><use href="#udf"/></svg>组重新构造</li>
    </ul>
    <div class="insert"></div>
  </aside>

  <div class="view">
    <div class="viewbar">
      <button title="重新调整"><svg class="i"><use href="#zfit"/></svg></button>
      <button title="放大"><svg class="i"><use href="#zin"/></svg></button>
      <button title="缩小"><svg class="i"><use href="#zout"/></svg></button>
      <button title="重画"><svg class="i"><use href="#repaint"/></svg></button>
      <button title="渲染"><svg class="i"><use href="#shade"/></svg></button>
      <button title="显示样式"><svg class="i"><use href="#vcube"/></svg></button>
      <button title="已保存方向"><svg class="i"><use href="#named"/></svg></button>
      <button title="视图管理器"><svg class="i"><use href="#cam"/></svg></button>
      <button title="透视图"><svg class="i"><use href="#persp"/></svg></button>
      <button title="截面"><svg class="i"><use href="#sect"/></svg></button>
      <button title="基准显示"><svg class="i"><use href="#datum"/></svg></button>
      <button class="pressed" title="注释显示"><svg class="i"><use href="#annot"/></svg></button>
      <button class="pressed" title="旋转中心"><svg class="i"><use href="#spin"/></svg></button>
      <button title="仿真"><svg class="i"><use href="#simu"/></svg></button>
      <button title="暂停"><svg class="i"><use href="#pause"/></svg></button>
      <button title="结果"><svg class="i"><use href="#res"/></svg></button>
    </div>

    <svg class="model" viewBox="268 170 1652 835">
      <defs>
        <filter id="soft" x="-20%" y="-20%" width="140%" height="140%"><feGaussianBlur stdDeviation="14"/></filter>
        <filter id="soft2" x="-20%" y="-20%" width="140%" height="140%"><feGaussianBlur stdDeviation="7"/></filter>
        <linearGradient id="back" x1="0" y1="0" x2="1" y2="1"><stop offset="0" stop-color="#7c7b84"/><stop offset=".5" stop-color="#84858f"/><stop offset="1" stop-color="#74757e"/></linearGradient>
        <linearGradient id="leg" x1="0" y1="0" x2="1" y2="0"><stop offset="0" stop-color="#8d8c96"/><stop offset="1" stop-color="#5d5e66"/></linearGradient>
        <linearGradient id="foot" x1="0" y1="0" x2="0" y2="1"><stop offset="0" stop-color="#77777f"/><stop offset=".6" stop-color="#a9a8b0"/><stop offset="1" stop-color="#6c6c74"/></linearGradient>
        <linearGradient id="ring" x1="0" y1="0" x2="1" y2="0"><stop offset="0" stop-color="#868dd6"/><stop offset=".4" stop-color="#9fa6f4"/><stop offset="1" stop-color="#7378a8"/></linearGradient>
        <linearGradient id="ringg" x1="0" y1="0" x2="1" y2="0"><stop offset="0" stop-color="#8a97a2"/><stop offset=".5" stop-color="#8c98a4"/><stop offset=".55" stop-color="#7f86b8"/><stop offset="1" stop-color="#65697e"/></linearGradient>
        <path id="armShape" d="M455 553C500 555 545 565 600 592C690 635 760 665 835 695C890 720 945 745 990 770C1030 795 1045 815 1060 840C1100 900 1130 955 1160 1015C1190 1075 1225 1135 1250 1190C1268 1230 1278 1270 1292 1310L1300 1405C1275 1400 1262 1380 1210 1305C1170 1240 1110 1150 1072 1070L1050 1020L985 925L895 842C870 812 830 795 760 762L690 733L600 690L500 640z"/>
        <path id="legShape" d="M530 800H570C575 870 605 945 636 1018C655 1070 655 1130 658 1190L665 1285C645 1280 620 1262 590 1220L520 1000z"/>
        <path id="bodyShape" fill-rule="evenodd" d="M282 520C282 450 330 412 372 412C430 415 440 480 450 525C455 548 475 560 490 590C505 625 560 660 610 690C680 728 750 760 820 797C880 830 920 850 970 900C1000 930 1030 980 1050 1018C1080 1080 1110 1160 1140 1240C1170 1320 1200 1420 1218 1530L1214 1600C1185 1595 1165 1550 1140 1500C1100 1410 1060 1300 1010 1195C985 1145 975 1124 953 1124C935 1124 920 1145 895 1180C865 1230 845 1265 815 1325C780 1390 760 1440 730 1475C715 1500 700 1513 655 1513C610 1513 590 1500 575 1480C560 1470 550 1460 540 1435C500 1320 440 1120 405 1010C370 910 315 790 292 725C285 700 286 670 295 640C300 590 282 570 282 520zM528 840C530 810 545 798 575 800C630 806 680 840 740 873C790 900 825 925 842 945C860 970 862 985 855 1010C820 1100 790 1180 760 1240C735 1300 718 1345 706 1390L690 1430L598 1405C598 1300 595 1240 588 1190C565 1080 525 940 528 840z"/>
        <clipPath id="bodyClip"><use href="#bodyShape" clip-rule="evenodd"/></clipPath>
        <clipPath id="armClip"><use href="#armShape"/></clipPath>
        <g id="lug">
          <ellipse rx="52" ry="26" fill="#97a3ae" class="edge"/>
          <ellipse cy="1" rx="34" ry="18" fill="#878b93" class="edge"/>
          <path d="M-30 8A34 18 0 0 1 20 -12C5 -5 5 10 15 17A34 18 0 0 1 -30 8z" fill="#c8cacf" opacity=".5"/>
        </g>
      </defs>

      <!-- coordenadas del modelo a coordenadas de la vista -->
      <g transform="translate(780 230) scale(.41467 .33333)">
        <g class="plane">
          <path class="thin" d="M151 220L50 543L486 2002L588 1680z"/>
          <path class="thin" d="M615 62L515 385L950 1843L1051 1522z"/>
          <path d="M236 332L1527 580L1439 1533L149 1284z"/>
          <path d="M841 277L740 597L653 1547L754 1225z"/>
          <path d="M200 1114L1490 1364L1388 1684L97 1435z"/>
        </g>

        <use href="#armShape" fill="url(#back)"/>
        <g clip-path="url(#armClip)">
          <path d="M500 570L835 730L990 815L1100 970L1260 1330" fill="none" stroke="#9698a4" stroke-width="34" filter="url(#soft)"/>
          <path d="M490 620L690 728L900 840L1050 1020L1210 1330" fill="none" stroke="#68676e" stroke-width="24" filter="url(#soft)"/>
        </g>
        <use href="#legShape" fill="url(#leg)"/>
        <path d="M598 1190C605 1240 622 1262 645 1280C665 1300 700 1303 740 1300L760 1230L655 1215z" fill="url(#foot)"/>
        <path d="M862 960C845 1040 800 1110 785 1140C770 1180 765 1220 758 1262L870 1100z" fill="#9894a0"/>
        <use href="#lug" x="706" y="1229"/>

        <!-- casquillos sueltos -->
        <path d="M967 1290L966 1330C975 1365 1060 1365 1068 1338L1072 1290z" fill="url(#ring)" class="edge"/>
        <use href="#lug" x="1020" y="1288"/>
        <path d="M901 1504L898 1545C910 1580 992 1580 1001 1550L1005 1510z" fill="url(#ring)" class="edge"/>
        <use href="#lug" x="953" y="1504"/>
        <path d="M1278 1360L1262 1375C1275 1405 1290 1414 1330 1414C1370 1414 1380 1405 1382 1390L1384 1350z" fill="url(#ringg)"/>
        <path d="M1262 1380C1275 1405 1290 1414 1330 1414C1370 1414 1380 1405 1382 1390L1384 1350M1327 1375V1414" fill="none" class="edge"/>
        <use href="#lug" x="1332" y="1346"/>

        <use href="#bodyShape" fill="#9fadbc"/>
        <g clip-path="url(#bodyClip)">
          <use href="#bodyShape" fill="none" stroke="#616e79" stroke-width="26" filter="url(#soft)"/>
          <path d="M400 720L470 1000L590 1440M460 660L610 720L880 860L970 960L1060 1150L1190 1540M940 1020L820 1240L720 1440" fill="none" stroke="#adbccb" stroke-width="26" opacity=".7" filter="url(#soft)"/>
          <path d="M455 655L515 680M322 605H330M590 1475H635M705 1435L695 1460" fill="none" stroke="#fff" stroke-width="13" stroke-linecap="round" filter="url(#soft2)"/>
          <path d="M530 688L620 725L700 765L900 870" fill="none" stroke="#c9d6e2" stroke-width="9" filter="url(#soft2)"/>
        </g>

        <path d="M1200 1590C1215 1620 1240 1628 1260 1628C1300 1628 1312 1610 1314 1600L1318 1565L1212 1560z" fill="url(#ringg)"/>
        <path d="M1200 1600C1215 1625 1240 1628 1260 1628C1300 1628 1312 1610 1314 1600L1318 1570M1268 1590V1628" fill="none" class="edge"/>
        <use href="#lug" x="1265" y="1562"/>
        <path d="M580 1485C600 1518 680 1525 700 1495" fill="none" class="edge"/>
        <use href="#lug" x="638" y="1440"/>
        <path d="M645 1275C670 1302 700 1303 740 1300M661 1188L654 1225M586 1435L598 1400M1282 1340L1288 1308M1213 1555L1220 1524M660 1195L765 1212L752 1255M598 1406L692 1425L688 1460" fill="none" class="edge"/>

        <!-- ojo superior -->
        <path d="M290 500C295 440 340 412 372 412C425 414 440 470 444 570C410 592 380 605 350 610C320 606 295 570 290 500z" fill="#94a1ad" class="edge"/>
        <path d="M325 437C350 405 400 410 415 425C435 450 440 500 440 530C430 460 400 425 325 437z" fill="#8487a8"/>
        <ellipse cx="370" cy="512" rx="70" ry="79" fill="#94a1ad" class="edge"/>
        <ellipse cx="370" cy="513" rx="51" ry="59" fill="#7a7f87" class="edge"/>
        <ellipse cx="372" cy="503" rx="47" ry="49" fill="#dddbde" class="edge"/>

        <!-- bordes de planos por delante -->
        <g class="front">
          <path d="M151 220L588 1680M515 385L950 1843M615 62L1051 1522M841 277L754 1225L653 1547M740 597L653 1547M841 277L740 597M149 1284L1439 1533M200 1114L1490 1364"/>
          <path d="M378 480L365 524M708 1200V1290M1023 1270L1015 1355M956 1468L948 1570M1338 1315L1328 1418M643 1410L635 1512M1271 1530L1261 1630" stroke-dasharray="14 3"/>
          <path d="M698 322L594 655" stroke-dasharray="8 3 2 3"/>
        </g>

        <path d="M762 1072L765 1004M706 1380L710 1290" class="axis green"/>
        <path d="M762 1072L817 1083M706 1380L785 1396" class="axis red"/>
        <path d="M762 1072L750 1100M706 1380L690 1420" class="axis cyan"/>
        <path d="M754 1385l26 10l-26 2z" fill="#f33"/>
        <ellipse cx="765" cy="1004" rx="6" ry="8" fill="#3f3"/>
        <ellipse cx="709" cy="1317" rx="5" ry="8" fill="#3f3"/>
        <ellipse cx="817" cy="1083" rx="6" ry="7" fill="#f33"/>
        <ellipse cx="750" cy="1100" rx="7" ry="8" fill="#3ff"/>
        <ellipse cx="698" cy="1395" rx="5" ry="9" fill="#3ff"/>
      </g>
      <g class="labels">
        <text x="972" y="688">PRT_CSYS_DEF</text>
        <text x="1106" y="708" fill="#f33">X</text>
        <text x="1076" y="656" fill="#3e3">Y</text>
        <text x="1054" y="714" fill="#3ee">Z</text>
      </g>
    </svg>
  </div>
</main>

<footer>
  <button class="pressed" title="导航器"><svg class="i"><use href="#pane"/></svg></button>
  <button title="浏览器"><svg class="i"><use href="#globe"/></svg></button>
  <button title="全屏"><svg class="i"><use href="#blank"/></svg></button>
  <span class="sep"></span>
  <span class="sep push"></span>
  <div class="find">
    <button title="查找"><svg class="i"><use href="#binoc"/></svg></button>
    <button class="drop" title="查找选项"><i class="arr"></i></button>
  </div>
  <div class="pick">
    <select aria-label="选择过滤器"><option>几何</option></select>
    <i class="arr"></i>
  </div>
</footer>

<div class="mark">
  <div class="zh"><span>野火</span>论坛</div>
  <div class="url">www.proewildfire.cn</div>
  <svg viewBox="0 0 20 44"><path d="M7 0C18 12 24 26 14 36C10 41 6 42 4 41C1 39 1 36 4 34C11 28 10 18 3 9C9 13 12 19 12 23C14 16 12 7 7 0z" fill="#ff6633"/></svg>
</div>

</body>
</html>
```
FILE: styles.css
```css
* {
  box-sizing: border-box;
}
body {
  margin: 0;
  height: 100vh;
  display: flex;
  flex-direction: column;
  font: 12px/16px "Noto Sans", "Noto Sans CJK SC", sans-serif;
  color: #3c4546;
  background: #f7f9fb;
  overflow: hidden;
  border-bottom: 2px solid #000;
}
button {
  font: inherit;
  color: inherit;
  background: none;
  border: 0;
  padding: 0;
  display: flex;
  align-items: center;
  justify-content: center;
  white-space: nowrap;
}
.defs {
  position: absolute;
}
.i {
  width: 16px;
  height: 16px;
  flex: none;
}
.arr {
  border: 4px solid transparent;
  border-top-color: #555;
  border-bottom: 0;
  flex: none;
}
.off {
  color: #a9adae;
}
.off .arr {
  border-top-color: #a9adae;
}
.pressed {
  background: #dcdedf;
  border: 1px solid #a9adae;
}
.sep {
  width: 1px;
  height: 24px;
  background: #b0b8b8;
}

/* barra de titulo */
.titlebar {
  display: grid;
  grid-template-columns: 1fr auto 1fr;
  height: 28px;
  flex: none;
  background: #dadfdd;
}
.quick {
  display: flex;
  align-items: center;
  padding-left: 8px;
}
.brand {
  width: 59px;
  padding-left: 4px;
  font: 500 18px/24px "Open Sans", sans-serif;
}
.brand sup {
  font-size: 8px;
  line-height: 8px;
}
.quick button {
  width: 24px;
  height: 24px;
}
.quick .drop {
  width: 14px;
}
.quick .last {
  border-right: 1px solid #a9adae;
  padding-right: 1px;
}
.titlebar h1 {
  margin: 0;
  padding: 0 4px;
  font: 13px/26px "Open Sans", "Noto Sans CJK SC", sans-serif;
  border-top: 1px solid;
  border-image: linear-gradient(90deg, #00b0c0 20%, #e4e4e4 20%) 1;
}
.win {
  display: flex;
  justify-content: flex-end;
  gap: 15px;
  padding-right: 11px;
}
.win svg, .tools svg {
  width: 12px;
  height: 12px;
}

/* pestañas */
.tabs {
  display: flex;
  height: 29px;
  flex: none;
  background: #3c4546;
  color: #fff;
  font-size: 13px;
}
.tabs > button {
  padding: 0 24px 0 23px;
}
.tabs .file {
  padding: 0 20px;
  background: linear-gradient(160deg, #6ad548, #4ba52f);
}
.tabs .on {
  background: #f8f9fc;
  color: #3c8a1e;
  font-weight: 500;
}
.tools {
  margin-left: auto;
  padding: 0 8px 4px 0;
  display: flex;
  gap: 12px;
}
.tools .arr {
  border-top-color: #fff;
}

/* cinta */
.ribbon {
  display: flex;
  height: 113px;
  flex: none;
  padding-left: 1px;
  background: #f8f9fc;
  border-bottom: 1px solid #b0b8b8;
}
.group {
  display: flex;
  flex-direction: column;
  margin: 2px 0;
  border-right: 1px solid #b0b8b8;
}
.body {
  display: flex;
  flex: 1;
}
.col {
  display: flex;
  flex-direction: column;
  margin-right: 7px;
}
.col:first-child {
  margin-left: 7px;
}
.col + .col {
  margin-left: 1px;
}
.col:has(+ .big) {
  margin-right: 0;
}
.col button {
  height: 28px;
  justify-content: flex-start;
  gap: 4px;
  padding-bottom: 2px;
}
.col button .arr {
  margin-left: 2px;
}
.big {
  flex-direction: column;
  justify-content: flex-start;
  min-width: 47px;
  padding: 4px 7px 0;
}
.big svg {
  width: 32px;
  height: 32px;
  margin-bottom: 10px;
}
.big .arr {
  margin-top: 6px;
}
.body > .big:only-child {
  margin: 0 auto;
}
.name {
  height: 24px;
  gap: 4px;
  padding: 3px 4px 0;
}
.hot .name {
  background: #edf1f4;
}

/* panel izquierdo */
main {
  flex: 1;
  min-height: 0;
  display: flex;
}
aside {
  width: 268px;
  flex: none;
  background: #f7fafb;
  border-right: 2px solid #d9dedc;
}
.sidetabs {
  display: flex;
  height: 26px;
  background: #dadfdd;
}
.sidetabs button {
  width: 32px;
}
.sidetabs .on {
  background: #f7fafb;
  padding-left: 2px;
}
.treebar {
  display: flex;
  align-items: center;
  gap: 8px;
  height: 32px;
  padding-left: 11px;
}
.treebar .pressed {
  width: 24px;
  height: 24px;
  margin: 0 -4px;
}
.grip {
  width: 10px;
  height: 16px;
  margin: 0 6px 0 -6px;
}
.narrow {
  width: 11px;
}
.filter {
  display: flex;
  align-items: center;
  padding-left: 12px;
}
.box {
  display: flex;
  width: 186px;
  height: 29px;
  margin: 0 5px 0 4px;
  padding-right: 5px;
  background: #fff;
  border: 1px solid #a9b3b3;
}
.box input {
  flex: 1;
  min-width: 0;
  border: 0;
  outline: 0;
}
.filter svg:not(.i) {
  width: 10px;
  height: 10px;
}
.filter > button:last-child {
  margin-left: 12px;
}
.tree {
  list-style: none;
  margin: 4px 0 0;
  padding: 0;
}
.tree li {
  display: flex;
  align-items: center;
  gap: 5px;
  height: 22px;
  padding-left: 31px;
  color: #555;
}
.tree .root {
  padding-left: 11px;
}
.tree .fold {
  padding-left: 17px;
}
.fold::before {
  content: "";
  border: 4px solid transparent;
  border-left: 7px solid #888;
  border-right: 0;
  margin-right: 2px;
}
.insert {
  height: 6px;
  margin: 5px 5px 0 11px;
  border: solid #5cc33b;
  border-width: 0 1px;
  background: linear-gradient(#5cc33b, #5cc33b) center / 100% 2px no-repeat;
}

/* area grafica */
.view {
  flex: 1;
  min-width: 0;
  position: relative;
  background: #e8e9ed;
}
.viewbar {
  position: absolute;
  top: 7px;
  left: 50%;
  transform: translateX(-50%);
  display: flex;
  align-items: center;
  height: 32px;
  padding: 0 2px;
  background: #f8f9fc;
  border: 1px solid #a0a4a4;
}
.viewbar button {
  width: 22px;
  height: 24px;
  margin: 0 2px;
}
.model {
  display: block;
  width: 100%;
  height: 100%;
}
.plane path {
  fill: rgba(132, 105, 103, .17);
  stroke: #7c4e56;
  vector-effect: non-scaling-stroke;
}
.plane .thin {
  fill: rgba(180, 185, 175, .1);
}
.front path {
  fill: none;
  stroke: #7c4e56;
  vector-effect: non-scaling-stroke;
}
.edge {
  stroke: #0a5cf0;
  stroke-width: 1px;
  vector-effect: non-scaling-stroke;
}
.axis {
  stroke-width: 1px;
  vector-effect: non-scaling-stroke;
}
.green { stroke: #3f3; }
.red { stroke: #f33; }
.cyan { stroke: #3ff; }
.labels {
  font: 13px "Liberation Mono", monospace;
  fill: #7c4e56;
}

/* barra de estado */
footer {
  display: flex;
  align-items: center;
  gap: 2px;
  height: 34px;
  flex: none;
  padding: 0 18px 0 5px;
  background: #f7fafb;
  border-top: 1px solid #b0b8b8;
}
footer > button {
  width: 24px;
  height: 24px;
}
footer > .sep {
  margin-left: 4px;
}
footer > .push {
  height: 26px;
  margin: 0 2px 0 auto;
}
.find {
  display: flex;
  height: 26px;
  padding: 0 2px;
  border: 1px solid #b0b8b8;
  border-width: 0 1px;
}
.find button {
  width: 28px;
  border: 1px solid #c0c6c6;
}
.find .drop {
  width: 15px;
  border-left: 0;
}
.pick {
  display: flex;
  align-items: center;
  width: 177px;
  height: 25px;
  margin-left: 95px;
  padding-right: 4px;
  border: 1px solid #a9b3b3;
}
.pick select {
  flex: 1;
  appearance: none;
  border: 0;
  background: none;
  font: inherit;
  color: inherit;
  padding: 0 7px;
}
.mark {
  position: absolute;
  right: 18px;
  bottom: 8px;
  width: 168px;
  pointer-events: none;
}
.mark .zh {
  font: italic 300 41px/48px "Noto Sans CJK SC", sans-serif;
  color: #000;
  white-space: nowrap;
}
.mark .zh span {
  color: #ff6633;
}
.mark .url {
  font: italic bold 16px/16px "Liberation Sans", sans-serif;
  color: #999;
  text-align: center;
}
.mark svg {
  position: absolute;
  left: 60px;
  top: -14px;
  width: 20px;
  height: 44px;
}
```
